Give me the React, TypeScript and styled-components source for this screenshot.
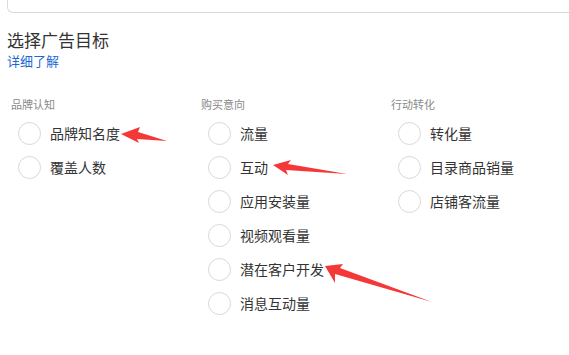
import React from 'react';
import styled, { createGlobalStyle } from 'styled-components';

type Group = {
  title: string,
  items: string[]
}

const groups: Group[] = [
  { title: '品牌认知', items: ['品牌知名度', '覆盖人数'] },
  { title: '购买意向', items: ['流量', '互动', '应用安装量', '视频观看量', '潜在客户开发', '消息互动量'] },
  { title: '行动转化', items: ['转化量', '目录商品销量', '店铺客流量'] },
]

const GlobalStyle = createGlobalStyle`
  html, body {
    margin: 0;
    padding: 0;
    background: #fff;
    overflow: hidden;
  }
  body {
    font-family: 'Noto Sans CJK SC', 'Noto Sans', sans-serif;
    color: #333;
  }
`

const Page = styled.div`
  position: relative;
  width: 569px;
  height: 355px;
  padding-left: 7px;
  box-sizing: border-box;
`

const TopCard = styled.div`
  height: 12px;
  margin-right: -12px;
  border: 1px solid #d9d9d9;
  border-top: none;
  border-radius: 0 0 6px 6px;
`

const Title = styled.h2`
  margin: 15px 0 0;
  font-size: 17px;
  line-height: 24px;
  font-weight: 400;
  color: #333;
`

const LearnMore = styled.a`
  display: block;
  font-size: 13px;
  line-height: 18px;
  color: #1b6ad2;
  text-decoration: none;
`

const Columns = styled.div`
  display: grid;
  grid-template-columns: repeat(3, 190px);
  margin: 26px 0 0 4px;
`

const Column = styled.div`
  display: flex;
  flex-direction: column;
`

const GroupTitle = styled.div`
  font-size: 11px;
  line-height: 16px;
  color: #8a8a8a;
  margin-bottom: 4px;
`

const Option = styled.label`
  display: flex;
  align-items: center;
  height: 34px;
  padding-left: 7px;
  font-size: 14px;
  color: #333;
`

const Radio = styled.span`
  width: 23px;
  height: 23px;
  box-sizing: border-box;
  border: 1px solid #d8d8d8;
  border-radius: 50%;
  margin-right: 9px;
  flex-shrink: 0;
`

const Annotations = styled.svg`
  position: absolute;
  left: 0;
  top: 0;
  pointer-events: none;
`

function Arrow({ points }: { points: string }) {
  return <polygon points={points} fill="#f43838" />
}

export default function App() {
  return <>
    <GlobalStyle />
    <Page>
      <TopCard />
      <Title>选择广告目标</Title>
      <LearnMore href="#">详细了解</LearnMore>
      <Columns>
        {groups.map(g => <Column key={g.title}>
          <GroupTitle>{g.title}</GroupTitle>
          {g.items.map(item => <Option key={item}>
            <Radio />
            {item}
          </Option>)}
        </Column>)}
      </Columns>
      <Annotations width="569" height="355" viewBox="0 0 569 355">
        <Arrow points="121,134 140,127 138,132 167,141 137,139 139,143" />
        <Arrow points="273,165 291,160 288,164 347,174 286,170 288,175" />
        <Arrow points="325,266 343,264 340,268 432,302 335,274 335,283" />
      </Annotations>
    </Page>
  </>
}
